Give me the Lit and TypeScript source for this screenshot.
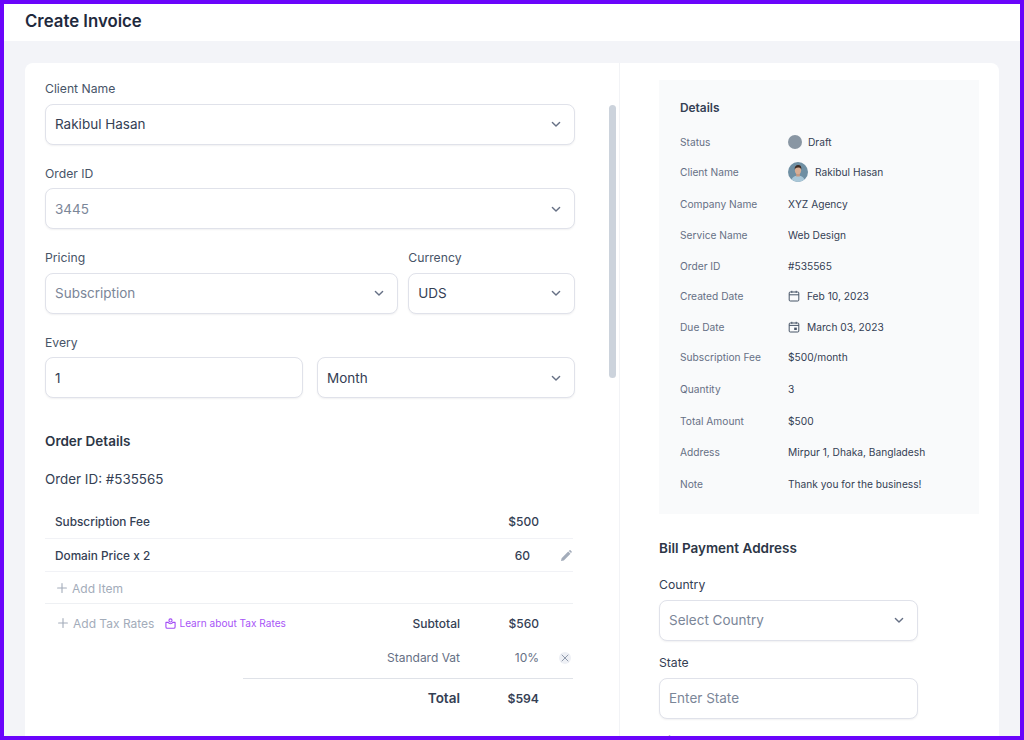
import { LitElement, html, css } from "lit";
import { customElement } from "lit/decorators.js";

const chevron = html`<svg class="chev" viewBox="0 0 12 12" width="12" height="12" fill="none" stroke="#667085" stroke-width="1.4" stroke-linecap="round" stroke-linejoin="round"><path d="M2.4 4.4 6 8l3.6-3.6"/></svg>`;
const plus = html`<svg viewBox="0 0 12 12" width="12" height="12" fill="none" stroke="#a3acba" stroke-width="1.1" stroke-linecap="round"><path d="M6 1.600v8.800M1.600 6h8.800"/></svg>`;
const calendar = html`<svg viewBox="0 0 12 12" width="12" height="12" fill="none" stroke="#475467" stroke-width="1"><rect x="1.200" y="2" width="9.600" height="9" rx="1"/><path d="M1.200 4.800h9.600M3.800.8v2M8.200.8v2"/></svg>`;
const calendarDue = html`<svg viewBox="0 0 12 12" width="12" height="12" fill="none" stroke="#475467" stroke-width="1"><rect x="1.200" y="2" width="9.600" height="9" rx="1"/><path d="M1.200 4.400h9.600M3.800.8v2M8.200.8v2"/><rect x="6.200" y="6.600" width="2.600" height="2.400" fill="#475467" stroke="none"/></svg>`;
const pencil = html`<svg viewBox="0 0 12 12" width="12" height="12" fill="#a3acba"><path d="M1 11l.6-2.800 6.600-6.700 2.300 2.300-6.700 6.600zM8.800.9l.8-.7c.3-.2.6-.2.9 0l1.200 1.200c.2.3.2.6 0 .9l-.7.8z"/></svg>`;
const close = html`<span class="x"><svg viewBox="0 0 12 12" width="8" height="8" fill="none" stroke="#8a94a6" stroke-width="1.400" stroke-linecap="round"><path d="M1.500 1.500l9 9M10.500 1.500l-9 9"/></svg></span>`;
const learn = html`<svg viewBox="0 0 12 12" width="11" height="11" fill="none" stroke="#a34cf5" stroke-width="1.200" stroke-linejoin="round"><circle cx="6" cy="2.600" r="1.700"/><path d="M1 4.800h2.600c.3 1 1.200 1.500 2.400 1.500s2.100-.5 2.400-1.500H11v5a1.400 1.400 0 0 1-1.400 1.400H2.400A1.400 1.400 0 0 1 1 9.800z"/></svg>`;
const avatar = html`<svg viewBox="0 0 20 20" width="20" height="20"><defs><clipPath id="av"><circle cx="10" cy="10" r="10"/></clipPath></defs><g clip-path="url(#av)"><rect width="20" height="20" fill="#6f8fa3"/><path d="M3 20c.5-4.500 3-6.300 7-6.300s6.500 1.800 7 6.300z" fill="#a9c7d8"/><rect x="8.200" y="10.500" width="3.600" height="4" fill="#c99a80"/><ellipse cx="10" cy="8.200" rx="3.100" ry="3.900" fill="#d8ad93"/><path d="M6.700 7.600c-.4-3 1.300-4.600 3.500-4.600s3.500 1.500 3.100 4.400c-.6-1.500-1.500-2-3.300-2s-2.700.7-3.300 2.200z" fill="#3c2a22"/></g></svg>`;

type Row = { label: string; value: unknown; h: number };
const rows: Row[] = [
  { label: "Status", value: html`<span class="val g10"><i class="dot"></i>Draft</span>`, h: 30 },
  { label: "Client Name", value: html`<span class="val g7">${avatar}Rakibul Hasan</span>`, h: 30 },
  { label: "Company Name", value: html`<span class="val">XYZ Agency</span>`, h: 33 },
  { label: "Service Name", value: html`<span class="val">Web Design</span>`, h: 30 },
  { label: "Order ID", value: html`<span class="val">#535565</span>`, h: 31 },
  { label: "Created Date", value: html`<span class="val g7">${calendar}Feb 10, 2023</span>`, h: 30 },
  { label: "Due Date", value: html`<span class="val g7">${calendarDue}March 03, 2023</span>`, h: 31 },
  { label: "Subscription Fee", value: html`<span class="val">$500/month</span>`, h: 30 },
  { label: "Quantity", value: html`<span class="val">3</span>`, h: 33 },
  { label: "Total Amount", value: html`<span class="val">$500</span>`, h: 31 },
  { label: "Address", value: html`<span class="val">Mirpur 1, Dhaka, Bangladesh</span>`, h: 32 },
  { label: "Note", value: html`<span class="val">Thank you for the business!</span>`, h: 32 },
];

@customElement("app-root")
export class AppRoot extends LitElement {
  static styles = css`
    :host {
      display: block; width: 1024px; height: 740px; box-sizing: border-box;
      border: 4px solid #6a04fb; overflow: hidden; background: #f3f4f8;
      font-family: Inter, "Liberation Sans", sans-serif; color: #344054;
    }
    * { box-sizing: border-box; }
    .top { height: 37px; background: #fff; padding: 0 21px; display: flex; align-items: center; }
    h1 { margin: 0; font-size: 16.800px; line-height: 34px; font-weight: 600; color: #1f2a3d; transform: translateY(-2px); }
    .card {
      margin: 22px 21px 0; background: #fff; border-radius: 8px 8px 0 0; height: 700px;
      display: flex; position: relative;
    }
    .left { width: 595px; padding: 15px 44px 0 20px; border-right: 1px solid #f2f3f6; }
    .right { flex: 1; padding: 17px 20px 0 39px; }
    .scroll { position: absolute; left: 584px; top: 42px; width: 7px; height: 273px; border-radius: 4px; background: #ccd3dc; }
    .f { display: flex; flex-direction: column; min-width: 0; }
    .f label, .every-lab { font-size: 12.200px; line-height: 21px; color: #475467; height: 25.500px; }
    .box {
      height: 41px; border: 1px solid #e0e2ea; border-radius: 8px; background: #fff;
      display: flex; align-items: center; justify-content: space-between;
      padding: 0 12px 0 9px; font-size: 13.500px; color: #344054;
      box-shadow: 0 1px 2px rgba(16, 24, 40, .06);
    }
    .ph { color: #7b8698; }
    .mb { margin-bottom: 18px; }
    .two { display: flex; }
    .pricing { gap: 10px; }
    .pricing .f:first-child { width: 354px; }
    .pricing .f:last-child { width: 167px; }
    .every { gap: 14px; }
    .every > * { flex: 1; }
    h2 { margin: 0; font-size: 13.500px; line-height: 20px; font-weight: 600; color: #2c3646; }
    .od { margin-top: 32.500px; }
    .oid { margin-top: 18px; font-size: 13.400px; line-height: 20px; color: #344054; }
    .table { margin-top: 17px; width: 528px; }
    .r { display: flex; align-items: center; padding-left: 10px; border-bottom: 1px solid #f1f2f6; font-size: 11.800px; font-weight: 500; color: #344054; }
    .r.a { height: 33px; }
    .r.a + .r.a { padding-top: 2px; }
    .r.b { height: 32px; padding-top: 2px; border-bottom-color: #eef0f3; }
    .nm { flex: 1; }
    .amt { width: 60px; text-align: right; font-size: 12px; }
    .amt.nine { padding-right: 9px; }
    .tail { width: 34px; display: flex; justify-content: flex-end; padding-right: 1px; }
    .add { display: flex; align-items: center; gap: 4px; font-size: 12px; font-weight: 400; color: #a3acba; padding-left: 1px; }
    .sum { display: flex; align-items: center; padding-left: 11px; height: 39px; font-size: 12px; font-weight: 500; }
    .link { display: flex; align-items: center; gap: 3px; margin-left: 11px; color: #a855f7; font-size: 10.100px; font-weight: 400; }
    .sp { flex: 1; }
    .lbl { width: 120px; text-align: right; }
    .amt2 { width: 79px; text-align: right; }
    .vat { display: flex; align-items: center; height: 30px; margin-left: 198px; font-size: 12px; color: #667085; font-weight: 400; }
    .line { margin-left: 198px; height: 1px; background: #dfe2e8; margin-top: 5px; }
    .tot { display: flex; align-items: center; height: 39px; margin-left: 198px; font-size: 13.500px; font-weight: 600; color: #344054; }
    .tot .amt2 { font-size: 12.200px; }
    .x { width: 12px; height: 12px; margin-right: 1px; border-radius: 50%; background: #eef0f5; display: flex; align-items: center; justify-content: center; }
    .details { background: #f9fafb; height: 434px; padding: 18px 21px 0; }
    h3 { margin: 0 0 9px; font-size: 11.900px; line-height: 20px; font-weight: 600; color: #344054; }
    .dr { display: flex; align-items: center; font-size: 10.200px; color: #667085; }
    .dl { width: 108px; }
    .val { color: #344054; display: flex; align-items: center; font-weight: 400; }
    .g10 { gap: 6px; }
    .g7 { gap: 7px; }
    .dot { width: 14px; height: 14px; border-radius: 50%; background: #8996a3; display: block; }
    .bill { margin-top: 24px; margin-bottom: 16px; font-size: 13.500px; }
    .rf { width: 259px; }
    .rf label { color: #344054; }
    .rmb { margin-bottom: 11.500px; }
  `;

  private field(label: string, value: string, ph = false, sel = true) {
    return html`<div class="f"><label>${label}</label>${this.box(value, ph, sel)}</div>`;
  }
  private box(value: string, ph = false, sel = true) {
    return html`<div class="box"><span class=${ph ? "ph" : ""}>${value}</span>${sel ? chevron : ""}</div>`;
  }

  render() {
    return html`
      <div class="top"><h1>Create Invoice</h1></div>
      <div class="card">
        <section class="left">
          <div class="mb">${this.field("Client Name", "Rakibul Hasan")}</div>
          <div class="mb">${this.field("Order ID", "3445", true)}</div>
          <div class="two pricing mb">
            ${this.field("Pricing", "Subscription", true)}
            ${this.field("Currency", "UDS")}
          </div>
          <div class="every-lab">Every</div>
          <div class="two every">
            ${this.box("1", false, false)}
            ${this.box("Month")}
          </div>
          <h2 class="od">Order Details</h2>
          <div class="oid">Order ID: #535565</div>
          <div class="table">
            <div class="r a"><span class="nm">Subscription Fee</span><span class="amt">$500</span><span class="tail"></span></div>
            <div class="r a"><span class="nm">Domain Price x 2</span><span class="amt nine">60</span><span class="tail">${pencil}</span></div>
            <div class="r b"><span class="add">${plus}Add Item</span></div>
            <div class="sum">
              <span class="add">${plus}Add Tax Rates</span>
              <span class="link">${learn}Learn about Tax Rates</span>
              <span class="sp"></span>
              <span class="lbl">Subtotal</span><span class="amt2">$560</span><span class="tail"></span>
            </div>
            <div class="vat"><span class="sp"></span><span class="lbl">Standard Vat</span><span class="amt2">10%</span><span class="tail">${close}</span></div>
            <div class="line"></div>
            <div class="tot"><span class="sp"></span><span class="lbl">Total</span><span class="amt2">$594</span><span class="tail"></span></div>
          </div>
        </section>
        <div class="scroll"></div>
        <aside class="right">
          <div class="details">
            <h3>Details</h3>
            ${rows.map((r) => html`<div class="dr" style="height:${r.h}px"><span class="dl">${r.label}</span>${r.value}</div>`)}
          </div>
          <h2 class="bill">Bill Payment Address</h2>
          <div class="rf rmb">${this.field("Country", "Select Country", true)}</div>
          <div class="rf rmb">${this.field("State", "Enter State", true, false)}</div>
          <div class="rf f"><label>City</label></div>
        </aside>
      </div>
    `;
  }
}
